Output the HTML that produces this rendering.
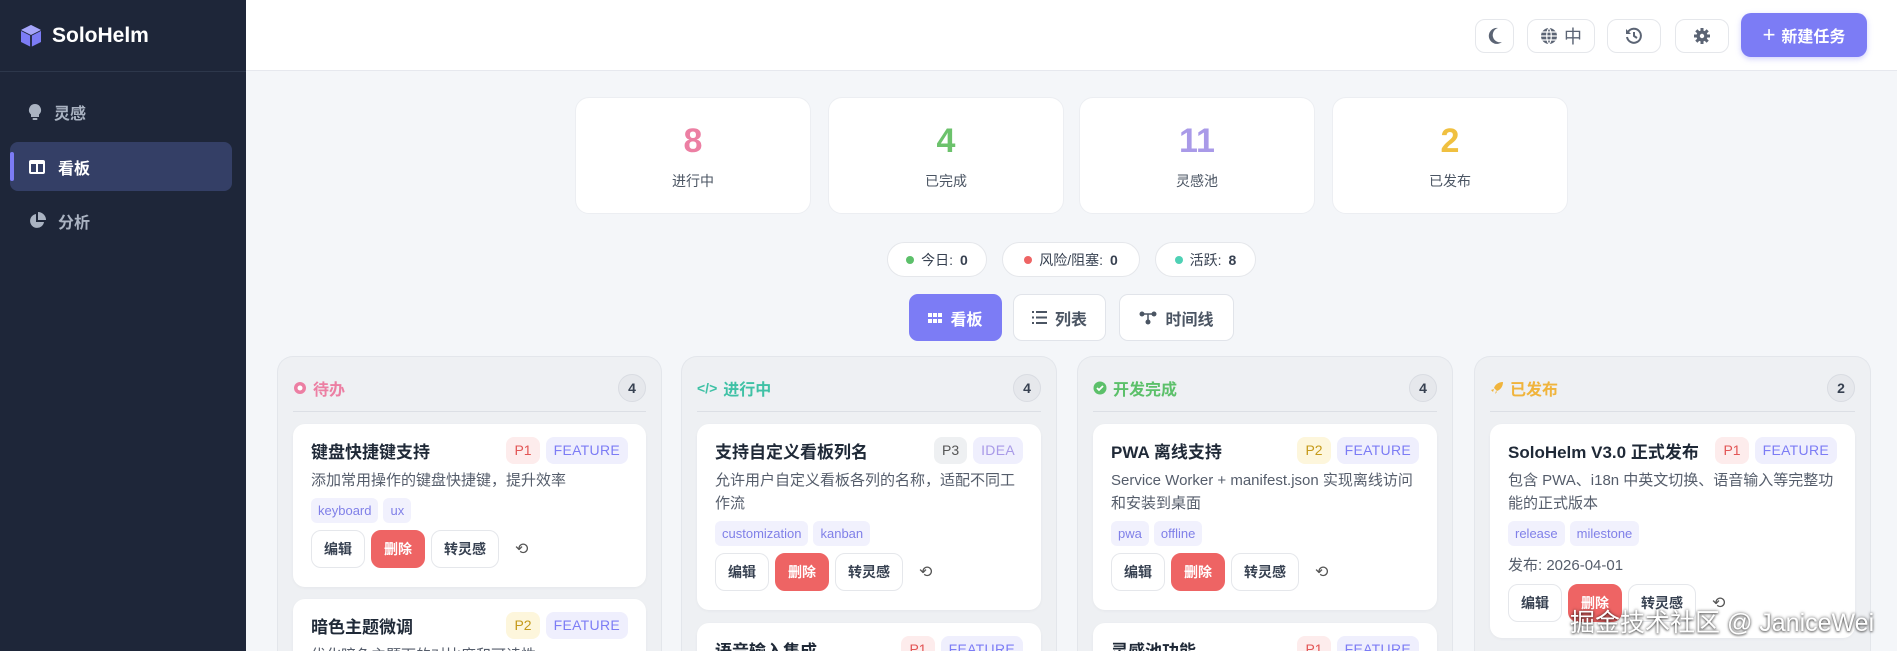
<!DOCTYPE html>
<html><head><meta charset="utf-8">
<style>
*{box-sizing:border-box;margin:0;padding:0}
html{width:1897px;height:651px;overflow:hidden}
body{width:1897px;height:651px;overflow:hidden;background:#f4f6f9;font-family:"Liberation Sans","Noto Sans CJK SC",sans-serif;position:relative;color:#1f2937}
.abs{position:absolute}
.side{left:0;top:0;width:246px;height:651px;background:#1e2639}
.logo{left:20px;top:24px;display:flex;align-items:center;gap:10px;color:#fff;font-weight:bold;font-size:21px}
.sdiv{left:0;top:71px;width:246px;height:1px;background:#2d374b}
.nav{left:10px;width:222px;height:49px;display:flex;align-items:center;padding-left:18px;gap:12px;color:#aab3c2;font-size:16px;font-weight:bold;border-radius:8px}
.nav.act{background:#343f66;color:#fff}
.nav.act:before{content:"";position:absolute;left:0;top:10px;width:4px;height:29px;background:#7c7cf5;border-radius:2px}
.hdr{left:246px;top:0;width:1651px;height:71px;background:#fff;border-bottom:1px solid #e6e8ee}
.hb{top:19px;height:34px;border:1px solid #e5e7eb;border-radius:10px;background:#fff;display:flex;align-items:center;justify-content:center;gap:6px;color:#5b6474;font-size:18px}
.newb{left:1741px;top:13px;width:126px;height:44px;background:#7c7cf5;border-radius:10px;color:#fff;font-weight:bold;font-size:16px;display:flex;align-items:center;justify-content:center;gap:6px;box-shadow:0 2px 6px rgba(124,124,245,.35)}
.stat{top:97px;width:236px;height:117px;background:#fff;border-radius:14px;border:1px solid #eceef2;text-align:center}
.stat b{display:block;font-size:34px;margin-top:23px;line-height:40px}
.stat span{display:block;font-size:14px;color:#4b5563;margin-top:10px}
.pill{top:242px;height:35px;background:#fff;border:1px solid #e5e7eb;border-radius:18px;display:flex;align-items:center;justify-content:center;gap:7px;font-size:14px;color:#374151}
.pill i{width:8px;height:8px;border-radius:50%;display:inline-block}
.vt{top:294px;height:47px;border:1px solid #e1e4ea;background:#fff;border-radius:9px;display:flex;align-items:center;justify-content:center;gap:8px;font-size:16px;font-weight:bold;color:#4b5563}
.vt.on{background:#7c7cf5;color:#fff;border-color:#7c7cf5}
.col{top:356px;height:295px;background:#eef0f3;border:1px solid #e3e6eb;border-bottom:none;border-radius:16px 16px 0 0;overflow:hidden}
.ch{position:absolute;left:15px;right:15px;top:8px;height:47px;border-bottom:1px solid #dcdfe5;display:flex;align-items:center;gap:6px;font-size:16px;font-weight:bold}
.cnt{position:absolute;right:0;top:9px;width:28px;height:28px;border-radius:50%;background:#e6e8ec;border:1px solid #d9dce2;color:#374151;font-size:14px;display:flex;align-items:center;justify-content:center}
.card{position:absolute;left:15px;right:15px;background:#fff;border-radius:12px;padding:0 18px;box-shadow:0 1px 3px rgba(0,0,0,.04)}
.tt{display:flex;align-items:center;height:30px;margin-top:11px;font-size:17px;font-weight:bold;color:#1f2937;white-space:nowrap}
.tt .g{flex:1}
.bd{height:27px;padding:0 8px;border-radius:8px;font-size:14px;display:flex;align-items:center;margin-left:6px;font-weight:normal}
.p1{background:#fdecec;color:#e25555}.p2{background:#fdf6dc;color:#c59a1a}.p3{background:#eef0f2;color:#555}
.ft{background:#efeffd;color:#7c7cf5;letter-spacing:.3px}
.ds{font-size:15px;color:#555d6b;line-height:23px;margin-top:4px}
.tags{display:flex;gap:5px;margin-top:6px}
.tg{background:#f1f1fd;color:#8080e8;font-size:13px;padding:0 7px;height:25px;line-height:25px;border-radius:6px}
.acts{display:flex;gap:6px;margin-top:7px;align-items:center}
.ab{height:38px;border:1px solid #e5e7eb;border-radius:10px;font-size:14px;font-weight:bold;color:#374151;display:flex;align-items:center;padding:0 12px;background:#fff}
.ab.del{background:#ee6464;color:#fff;border-color:#ee6464}
.wm{left:1570px;top:603px;font-size:25px;color:#fff;text-shadow:0 0 3px rgba(0,0,0,.6),0 1px 2px rgba(0,0,0,.5);white-space:nowrap}
</style></head><body>
<div class="abs side"></div>
<div class="abs logo"><svg width="22" height="24" viewBox="0 0 22 24"><path d="M11 1 21 6v12l-10 5L1 18V6z" fill="#7c7cf5"/><path d="M1 6l10 5 10-5M11 11v12" stroke="#1e2639" stroke-width="1.8" fill="none"/><path d="M1 6l10-5 10 5-10 5z" fill="#a5a5fa"/></svg>SoloHelm</div>
<div class="abs sdiv"></div>
<div class="abs nav" style="top:87px"><svg width="14" height="18" viewBox="0 0 14 18"><path d="M7 1a6 6 0 0 0-4 10.5V14h8v-2.5A6 6 0 0 0 7 1z" fill="#aab3c2"/><rect x="4.5" y="15" width="5" height="2" rx="1" fill="#aab3c2"/></svg>灵感</div>
<div class="abs nav act" style="top:142px"><svg width="18" height="16" viewBox="0 0 18 16"><rect x="1" y="1" width="16" height="14" rx="2" fill="#fff"/><rect x="3" y="5" width="5" height="8" fill="#343f66"/><rect x="10" y="5" width="5" height="8" fill="#343f66"/></svg>看板</div>
<div class="abs nav" style="top:196px"><svg width="18" height="18" viewBox="0 0 18 18"><path d="M8 2a7 7 0 1 0 8 8H8z" fill="#aab3c2"/><path d="M10 0v8h8a8 8 0 0 0-8-8z" fill="#aab3c2"/></svg>分析</div>

<div class="abs hdr"></div>
<div class="abs hb" style="left:1475px;width:39px"><svg width="16" height="18" viewBox="0 0 16 18"><path d="M11 1a8 8 0 1 0 4 14A7 7 0 0 1 11 1z" fill="#5b6474"/></svg></div>
<div class="abs hb" style="left:1527px;width:68px"><svg width="18" height="18" viewBox="0 0 18 18"><circle cx="9" cy="9" r="8" fill="#5b6474"/><path d="M1 9h16M9 1c-3 3-3 13 0 16M9 1c3 3 3 13 0 16M2 5h14M2 13h14" stroke="#fff" stroke-width="1.2" fill="none"/></svg>中</div>
<div class="abs hb" style="left:1607px;width:54px"><svg width="18" height="18" viewBox="0 0 18 18"><path d="M3 5a7 7 0 1 1-1 5" stroke="#5b6474" stroke-width="2" fill="none"/><path d="M1 2v5h5z" fill="#5b6474"/><path d="M9 5v4l3 2" stroke="#5b6474" stroke-width="2" fill="none"/></svg></div>
<div class="abs hb" style="left:1675px;width:54px"><svg width="16" height="16" viewBox="0 0 16 16"><circle cx="8" cy="8" r="5.5" fill="#5b6474"/><g stroke="#5b6474" stroke-width="3"><path d="M8 0v16M0 8h16M2.3 2.3l11.4 11.4M13.7 2.3 2.3 13.7"/></g><circle cx="8" cy="8" r="2.2" fill="#fff"/></svg></div>
<div class="abs newb"><span style="font-size:22px;font-weight:normal">+</span>新建任务</div>

<div class="abs stat" style="left:575px"><b style="color:#ec7fa3">8</b><span>进行中</span></div>
<div class="abs stat" style="left:828px"><b style="color:#6cc26c">4</b><span>已完成</span></div>
<div class="abs stat" style="left:1079px"><b style="color:#a99ae8">11</b><span>灵感池</span></div>
<div class="abs stat" style="left:1332px"><b style="color:#f0c040">2</b><span>已发布</span></div>

<div class="abs pill" style="left:887px;width:100px"><i style="background:#5cc06a"></i>今日: <b>0</b></div>
<div class="abs pill" style="left:1002px;width:138px"><i style="background:#ee6464"></i>风险/阻塞: <b>0</b></div>
<div class="abs pill" style="left:1155px;width:101px"><i style="background:#4fd1b5"></i>活跃: <b>8</b></div>

<div class="abs vt on" style="left:909px;width:93px"><svg width="14" height="10" viewBox="0 0 14 10"><g fill="#fff"><rect width="4" height="4"/><rect x="5" width="4" height="4"/><rect x="10" width="4" height="4"/><rect y="6" width="4" height="4"/><rect x="5" y="6" width="4" height="4"/><rect x="10" y="6" width="4" height="4"/></g></svg>看板</div>
<div class="abs vt" style="left:1013px;width:93px"><svg width="15" height="13" viewBox="0 0 15 13"><g fill="#4b5563"><rect width="2" height="2"/><rect x="4" width="11" height="2"/><rect y="5.5" width="2" height="2"/><rect x="4" y="5.5" width="11" height="2"/><rect y="11" width="2" height="2"/><rect x="4" y="11" width="11" height="2"/></g></svg>列表</div>
<div class="abs vt" style="left:1119px;width:115px"><svg width="18" height="14" viewBox="0 0 18 14"><g fill="#4b5563"><circle cx="3" cy="3" r="2.5"/><circle cx="15" cy="3" r="2.5"/><circle cx="9" cy="11" r="2.5"/></g><path d="M3 3h12M9 3v8" stroke="#4b5563" stroke-width="1.5"/></svg>时间线</div>

<!-- col1 -->
<div class="abs col" style="left:277px;width:385px">
<div class="ch" style="color:#ec7fa3"><svg width="14" height="14"><circle cx="7" cy="7" r="6" fill="#ec7fa3"/><circle cx="7" cy="7" r="2.5" fill="#fff"/></svg>待办<div class="cnt">4</div></div>
<div class="card" style="top:67px;height:163px"><div class="tt"><span class="g">键盘快捷键支持</span><span class="bd p1">P1</span><span class="bd ft">FEATURE</span></div><div class="ds">添加常用操作的键盘快捷键，提升效率</div><div class="tags"><span class="tg">keyboard</span><span class="tg">ux</span></div><div class="acts"><span class="ab">编辑</span><span class="ab del">删除</span><span class="ab">转灵感</span><span style="margin-left:10px;color:#555">⟲</span></div></div>
<div class="card" style="top:242px;height:100px"><div class="tt"><span class="g">暗色主题微调</span><span class="bd p2">P2</span><span class="bd ft">FEATURE</span></div><div class="ds">优化暗色主题下的对比度和可读性</div></div>
</div>
<!-- col2 -->
<div class="abs col" style="left:681px;width:376px">
<div class="ch" style="color:#3fc1a5"><span style="font-size:14px">&lt;/&gt;</span>进行中<div class="cnt">4</div></div>
<div class="card" style="top:67px;height:186px"><div class="tt"><span class="g">支持自定义看板列名</span><span class="bd p3">P3</span><span class="bd ft" style="color:#a99ae8">IDEA</span></div><div class="ds">允许用户自定义看板各列的名称，适配不同工作流</div><div class="tags"><span class="tg">customization</span><span class="tg">kanban</span></div><div class="acts"><span class="ab">编辑</span><span class="ab del">删除</span><span class="ab">转灵感</span><span style="margin-left:10px;color:#555">⟲</span></div></div>
<div class="card" style="top:266px;height:100px"><div class="tt"><span class="g">语音输入集成</span><span class="bd p1">P1</span><span class="bd ft">FEATURE</span></div></div>
</div>
<!-- col3 -->
<div class="abs col" style="left:1077px;width:376px">
<div class="ch" style="color:#5cc06a"><svg width="14" height="14"><circle cx="7" cy="7" r="6.5" fill="#5cc06a"/><path d="M4 7l2 2 4-4" stroke="#fff" stroke-width="1.8" fill="none"/></svg>开发完成<div class="cnt">4</div></div>
<div class="card" style="top:67px;height:186px"><div class="tt"><span class="g">PWA 离线支持</span><span class="bd p2">P2</span><span class="bd ft">FEATURE</span></div><div class="ds">Service Worker + manifest.json 实现离线访问和安装到桌面</div><div class="tags"><span class="tg">pwa</span><span class="tg">offline</span></div><div class="acts"><span class="ab">编辑</span><span class="ab del">删除</span><span class="ab">转灵感</span><span style="margin-left:10px;color:#555">⟲</span></div></div>
<div class="card" style="top:266px;height:100px"><div class="tt"><span class="g">灵感池功能</span><span class="bd p1">P1</span><span class="bd ft">FEATURE</span></div></div>
</div>
<!-- col4 -->
<div class="abs col" style="left:1474px;width:397px">
<div class="ch" style="color:#f0b43c"><svg width="14" height="14"><path d="M13 1C8 1 5 4 4 7l3 3c3-1 6-4 6-9zM4 8l-3 1 2 2zM6 10l-1 3 2-2z" fill="#f0b43c"/></svg>已发布<div class="cnt">2</div></div>
<div class="card" style="top:67px;height:214px"><div class="tt"><span class="g">SoloHelm V3.0 正式发布</span><span class="bd p1">P1</span><span class="bd ft">FEATURE</span></div><div class="ds">包含 PWA、i18n 中英文切换、语音输入等完整功能的正式版本</div><div class="tags"><span class="tg">release</span><span class="tg">milestone</span></div><div class="ds" style="margin-top:8px">发布: 2026-04-01</div><div class="acts"><span class="ab">编辑</span><span class="ab del">删除</span><span class="ab">转灵感</span><span style="margin-left:10px;color:#555">⟲</span></div></div>
</div>
<div class="abs wm">掘金技术社区 @ JaniceWei</div>
</body></html>
